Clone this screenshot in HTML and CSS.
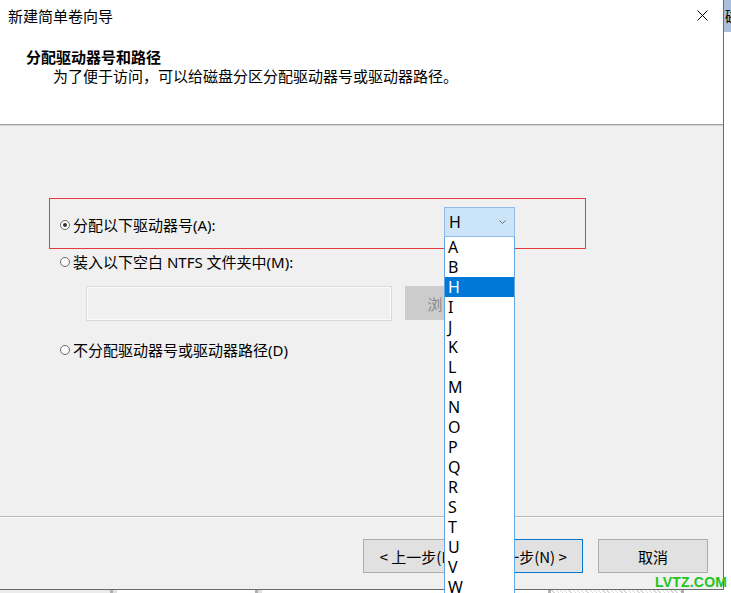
FILE: index.html
```html
<!DOCTYPE html>
<html lang="zh-CN">
<head>
<meta charset="utf-8">
<title>新建简单卷向导</title>
<link rel="stylesheet" href="styles.css">
</head>
<body>
<div class="screen">
  <div class="top-row">
    <div class="window">
      <div class="titlebar">
        <span class="title">新建简单卷向导</span>
        <svg class="close" width="11" height="11" viewBox="0 0 11 11"><path d="M0.5 0.5 L10.5 10.5 M10.5 0.5 L0.5 10.5" stroke="#000" stroke-width="1" fill="none"/></svg>
      </div>
      <div class="header">
        <div class="heading">分配驱动器号和路径</div>
        <div class="subheading">为了便于访问，可以给磁盘分区分配驱动器号或驱动器路径。</div>
      </div>
      <div class="sep-top"></div>
      <div class="content">
        <div class="red-box">
          <label class="radio-row first">
            <span class="radio checked"></span>
            <span>分配以下驱动器号(A):</span>
          </label>
          <div class="combo">
            <span>H</span>
            <svg width="7" height="4" viewBox="0 0 7 4"><path d="M0.5 0.5 L3.5 3.5 L6.5 0.5" stroke="#6d6d6d" fill="none" stroke-width="1"/></svg>
          </div>
        </div>
        <label class="radio-row second">
          <span class="radio"></span>
          <span>装入以下空白 NTFS 文件夹中(M):</span>
        </label>
        <div class="path-row">
          <div class="path-input"></div>
          <div class="browse">浏览(R)...</div>
        </div>
        <label class="radio-row third">
          <span class="radio"></span>
          <span>不分配驱动器号或驱动器路径(D)</span>
        </label>
      </div>
      <div class="sep-bottom"></div>
      <div class="footer">
        <div class="btn">&lt; 上一步(B)</div>
        <div class="btn focus">下一步(N) &gt;</div>
        <div class="btn cancel">取消</div>
      </div>
    </div>
    <div class="side">
      <div class="side-top">磁</div>
    </div>
  </div>
  <div class="bottom-strip">
    <span class="seg gray" style="width:110px"></span>
    <span class="seg bar"></span>
    <span class="seg bar2"></span>
    <span class="seg white" style="width:138px"></span>
    <span class="seg bar"></span>
    <span class="seg bar2"></span>
    <span class="seg white" style="width:286px"></span>
    <span class="seg bar"></span>
    <span class="seg hatch" style="width:130px"></span>
    <span class="seg bar"></span>
    <span class="seg white" style="width:40px"></span>
  </div>

  <ul class="droplist">
    <li>A</li><li>B</li><li class="sel">H</li><li>I</li><li>J</li><li>K</li><li>L</li><li>M</li><li>N</li><li>O</li><li>P</li><li>Q</li><li>R</li><li>S</li><li>T</li><li>U</li><li>V</li><li>W</li>
  </ul>
  <div class="watermark">LVTZ.COM</div>
</div>
</body>
</html>
```
FILE: styles.css
```css
* { box-sizing: border-box; }
html, body { margin: 0; padding: 0; }
body {
  width: 731px;
  height: 593px;
  overflow: hidden;
  background: #fff;
  font-family: "Noto Sans", "Noto Sans CJK SC", sans-serif;
  font-size: 15px;
  color: #000;
}
.screen {
  position: relative;
  width: 731px;
  height: 593px;
  overflow: hidden;
}
.top-row {
  display: flex;
  height: 590px;
}
.window {
  width: 724px;
  height: 590px;
  border-right: 1px solid #6a6a6a;
  border-bottom: 1px solid #6a6a6a;
  background: #fff;
  display: flex;
  flex-direction: column;
}
.titlebar {
  height: 32px;
  display: flex;
  align-items: center;
  justify-content: space-between;
  padding-left: 8px;
  padding-right: 15px;
  flex: none;
}
.title {
  font-family: "Noto Sans CJK SC", sans-serif;
  font-size: 15px;
  line-height: 20px;
  margin-top: -1px;
}
.close { display: block; margin-top: -1px; }
.header {
  height: 92px;
  padding-top: 15px;
  padding-left: 26px;
  flex: none;
  font-family: "Noto Sans CJK SC", sans-serif;
}
.heading {
  font-weight: bold;
  font-size: 15px;
  line-height: 19px;
}
.subheading {
  padding-left: 27px;
  font-size: 15px;
  line-height: 19px;
}
.sep-top {
  height: 2px;
  border-top: 1px solid #a0a0a0;
  border-bottom: 1px solid #d4d4d4;
  flex: none;
}
.content {
  height: 390px;
  background: #f0f0f0;
  padding-top: 72px;
  padding-left: 49px;
  flex: none;
}
.red-box {
  width: 537px;
  height: 51px;
  border: 1px solid #e3393f;
  display: flex;
  align-items: flex-start;
  padding-left: 10px;
}
.radio-row {
  display: flex;
  align-items: center;
  height: 20px;
  line-height: 20px;
  gap: 3px;
}
.radio-row.first {
  width: 384px;
  margin-top: 16px;
}
.radio-row.second {
  margin-top: 3px;
  padding-left: 11px;
}
.radio-row.third {
  margin-top: 19px;
  padding-left: 11px;
}
.radio {
  width: 10px;
  height: 10px;
  border-radius: 50%;
  border: 1px solid #6b6b6b;
  background: #fff;
  display: inline-flex;
  align-items: center;
  justify-content: center;
  flex: none;
}
.radio.checked::after {
  content: "";
  width: 4px;
  height: 4px;
  border-radius: 50%;
  background: #333;
}
.combo {
  width: 71px;
  height: 30px;
  margin-top: 8px;
  background: #cce4f7;
  border: 1px solid #8fbbe6;
  display: flex;
  align-items: center;
  justify-content: space-between;
  padding: 0 8px 0 4px;
  font-size: 16px;
}
.combo svg { display: block; margin-bottom: 1px; }
.path-row {
  display: flex;
  margin-top: 14px;
  padding-left: 37px;
  gap: 13px;
}
.path-input {
  width: 306px;
  height: 35px;
  border: 1px solid #d9d9d9;
  box-shadow: inset 0 0 0 1px #fbfbfb;
  background: #f0f0f0;
}
.browse {
  width: 110px;
  height: 34px;
  background: #cccccc;
  color: #8a8a8a;
  display: flex;
  align-items: center;
  justify-content: center;
  padding-right: 3px;
  font-family: "Noto Sans CJK SC", sans-serif;
}
.sep-bottom {
  height: 2px;
  border-top: 1px solid #b9b9b9;
  border-bottom: 1px solid #fbfbfb;
  flex: none;
}
.footer {
  flex: 1;
  background: #f0f0f0;
  display: flex;
  justify-content: flex-end;
  align-items: flex-start;
  padding-top: 21px;
  padding-right: 15px;
}
.btn {
  width: 110px;
  height: 34px;
  background: #e1e1e1;
  border: 1px solid #adadad;
  display: flex;
  align-items: center;
  justify-content: center;
  font-family: "Noto Sans CJK SC", sans-serif;
  font-size: 15px;
}
.btn.focus {
  border-color: #0078d7;
}
.btn.cancel {
  margin-left: 15px;
}
.side {
  flex: 1;
  background: #fff;
  overflow: hidden;
}
.side-top {
  height: 32px;
  background: #a9bfdb;
  font-family: "Noto Sans CJK SC", sans-serif;
  font-size: 15px;
  line-height: 32px;
  padding-left: 1px;
  white-space: nowrap;
}
.bottom-strip {
  display: flex;
  height: 3px;
}
.seg { display: block; height: 3px; flex: none; }
.seg.gray { background: #ececec; }
.seg.white { background: #fff; }
.seg.bar { width: 3px; background: #b0b0b0; }
.seg.bar2 { width: 4px; background: #e0e0e0; }
.seg.hatch { background: repeating-linear-gradient(45deg, #fff 0 2px, #d8d8d8 2px 3px); }
.droplist {
  position: absolute;
  left: 444px;
  top: 237px;
  width: 71px;
  height: 380px;
  margin: 0;
  padding: 0;
  list-style: none;
  background: #fff;
  border: 1px solid #64a5e6;
  border-top: none;
}
.droplist li {
  height: 20px;
  line-height: 20px;
  padding-left: 3px;
  font-size: 16px;
}
.droplist li.sel {
  background: #0078d7;
  color: #fff;
}
.watermark {
  position: absolute;
  left: 655px;
  top: 574px;
  font-family: "Liberation Sans", Arial, sans-serif;
  font-weight: bold;
  font-size: 14px;
  line-height: 16px;
  color: #22c41e;
  letter-spacing: 0.2px;
}
```
